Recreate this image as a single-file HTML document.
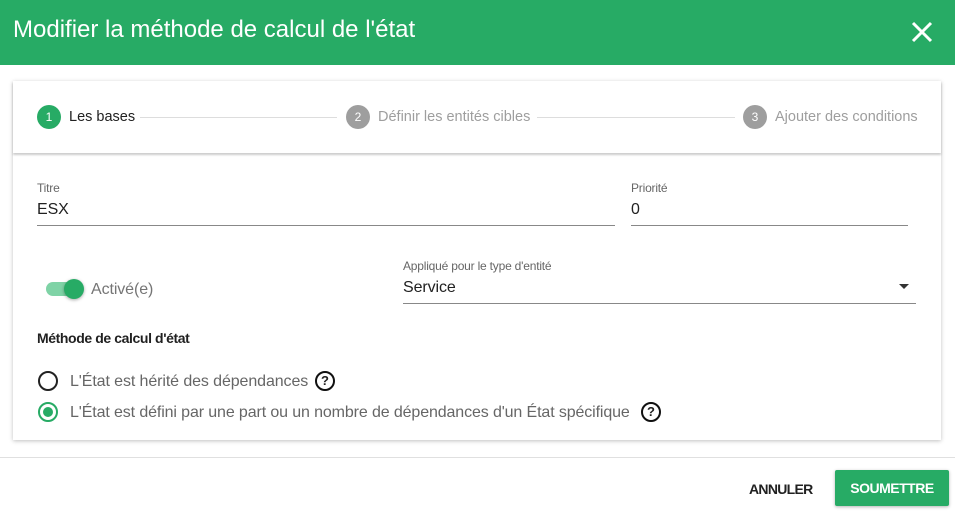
<!DOCTYPE html>
<html><head><meta charset="utf-8"><style>
*{margin:0;padding:0;box-sizing:border-box}
body{width:955px;height:516px;background:#fff;font-family:"Liberation Sans",sans-serif;position:relative;overflow:hidden;color:#212121}
.a{position:absolute;white-space:nowrap}
.hdr{left:0;top:0;width:955px;height:65px;background:#27ab65}
.card{left:13px;top:81px;width:928px;height:359px;background:#fff;box-shadow:0 1px 4px rgba(0,0,0,.25)}
.step{height:72px;left:13px;top:81px;width:928px;box-shadow:0 2px 2px rgba(0,0,0,.2);background:#fff}
.c{width:24px;height:24px;border-radius:50%;color:#fff;font-size:12px;text-align:center;line-height:24px}
.ln{height:1px;background:#ddd}
.t{font-size:14.5px;letter-spacing:0}
.lbl{font-size:12px;color:#666;letter-spacing:-0.2px}
.val{font-size:16px;letter-spacing:-0.1px}
.ul{height:1px;background:#888}
</style></head><body>
<div class="a hdr"></div>
<div class="a" style="left:13px;top:16px;color:#fff;font-size:24px;letter-spacing:0">Modifier la méthode de calcul de l'état</div>
<svg class="a" style="left:911px;top:21px" width="22" height="22"><path d="M2 2L20 20M20 2L2 20" stroke="#fff" stroke-width="3"/></svg>
<div class="a card"></div>
<div class="a step"></div>
<div class="a c" style="left:37px;top:105px;background:#27ab65">1</div>
<div class="a t" style="left:69px;top:109px">Les bases</div>
<div class="a ln" style="left:140px;top:117px;width:197px"></div>
<div class="a c" style="left:346px;top:105px;background:#9e9e9e">2</div>
<div class="a t" style="left:378px;top:109px;color:#9e9e9e">Définir les entités cibles</div>
<div class="a ln" style="left:537px;top:117px;width:198px"></div>
<div class="a c" style="left:743px;top:105px;background:#9e9e9e">3</div>
<div class="a t" style="left:775px;top:109px;color:#9e9e9e">Ajouter des conditions</div>

<div class="a lbl" style="left:37px;top:181px">Titre</div>
<div class="a val" style="left:37px;top:201px">ESX</div>
<div class="a ul" style="left:37px;top:225px;width:578px"></div>
<div class="a lbl" style="left:631px;top:181px">Priorité</div>
<div class="a val" style="left:631px;top:201px">0</div>
<div class="a ul" style="left:631px;top:225px;width:277px"></div>

<div class="a" style="left:46px;top:282px;width:36px;height:14px;border-radius:7px;background:#7fd3a6"></div>
<div class="a" style="left:64px;top:279px;width:20px;height:20px;border-radius:50%;background:#27ab65;box-shadow:0 1px 3px rgba(0,0,0,.35)"></div>
<div class="a val" style="left:91px;top:281px;color:#757575">Activé(e)</div>

<div class="a lbl" style="left:403px;top:259px">Appliqué pour le type d'entité</div>
<div class="a val" style="left:403px;top:279px">Service</div>
<svg class="a" style="left:899px;top:284px" width="12" height="6"><path d="M0 0L10 0L5 5Z" fill="#333"/></svg>
<div class="a ul" style="left:403px;top:303px;width:513px"></div>

<div class="a" style="left:37px;top:330px;font-size:14px;font-weight:bold;letter-spacing:-0.4px">Méthode de calcul d'état</div>
<div class="a" style="left:38px;top:371px;width:20px;height:20px;border-radius:50%;border:2px solid #222"></div>
<div class="a val" style="left:70px;top:373px;color:#666">L'État est hérité des dépendances</div>
<div class="a" style="left:315px;top:371px;width:20px;height:20px;border-radius:50%;border:2px solid #111;font-size:13px;font-weight:bold;text-align:center;line-height:16px">?</div>
<div class="a" style="left:38px;top:402px;width:20px;height:20px;border-radius:50%;border:2px solid #27ab65"></div>
<div class="a" style="left:43px;top:407px;width:10px;height:10px;border-radius:50%;background:#27ab65"></div>
<div class="a val" style="left:70px;top:404px;color:#666;letter-spacing:-0.12px">L'État est défini par une part ou un nombre de dépendances d'un État spécifique</div>
<div class="a" style="left:641px;top:402px;width:20px;height:20px;border-radius:50%;border:2px solid #111;font-size:13px;font-weight:bold;text-align:center;line-height:16px">?</div>

<div class="a" style="left:0;top:457px;width:955px;height:1px;background:#e0e0e0"></div>
<div class="a" style="left:749px;top:481px;font-size:14px;font-weight:bold;letter-spacing:-0.7px">ANNULER</div>
<div class="a" style="left:835px;top:470px;width:114px;height:36px;background:#27ab65;border-radius:2px;box-shadow:0 1px 3px rgba(0,0,0,.3);color:#fff;font-size:14px;font-weight:bold;text-align:center;line-height:36px;letter-spacing:-0.5px">SOUMETTRE</div>
</body></html>
